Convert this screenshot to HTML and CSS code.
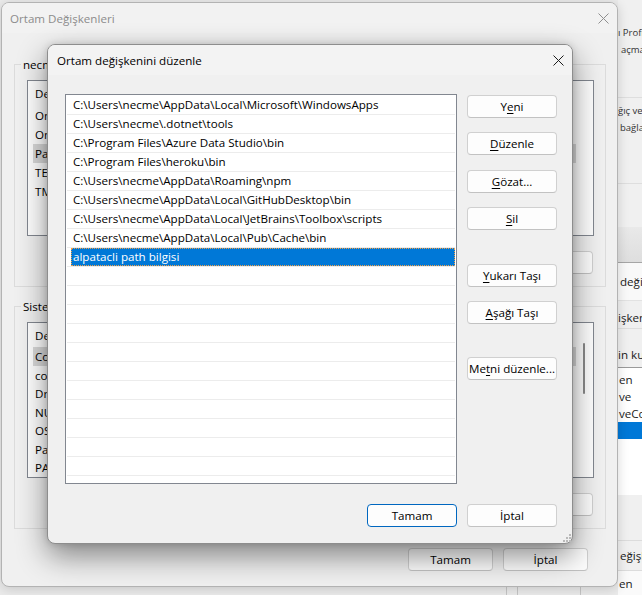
FILE: index.html
```html
<!DOCTYPE html>
<html lang="tr">
<head>
<meta charset="utf-8">
<title>Ortam değişkenini düzenle</title>
<link rel="stylesheet" href="styles.css">
</head>
<body>
<div class="desktop">

  <div class="backwin">
    <div class="back-left">
      <div class="back-bottom">
        <span class="bs bs1"></span><span class="bs bs2"></span><span class="bs bs3"></span>
      </div>
    </div>
    <div class="back-right">
      <div class="br br-a">
        <div class="bt small">ı Profilleri</div>
        <div class="bt small in3">açma ve kapatma</div>
      </div>
      <div class="br br-b">
        <div class="bt small">ğıç ve Kurtarma</div>
        <div class="bt small in2">bağlantısı</div>
      </div>
      <div class="br br-c"></div>
      <div class="br br-band"></div>
      <div class="br br-d"><div class="bt in2">değişkenleri</div></div>
      <div class="br br-e"><div class="bt">işkenleri</div></div>
      <div class="br br-f"><div class="bt">in kullanıcı</div></div>
      <div class="br br-list">
        <div class="bl in1">en</div>
        <div class="bl in1">ve</div>
        <div class="bl in1">veConsumer</div>
        <div class="bl bl-sel"></div>
      </div>
      <div class="br br-h"></div>
      <div class="br br-i"><div class="bt in2">eğişkenleri</div></div>
      <div class="br br-j"><div class="bt in1">en</div></div>
    </div>
  </div>

  <div class="window outer">
    <div class="titlebar outer-title">
      <span>Ortam Değişkenleri</span>
      <svg class="xicon" width="11" height="11" viewBox="0 0 11 11"><path d="M0.5 0.5 L10.5 10.5 M10.5 0.5 L0.5 10.5" stroke="#8f8f8f" stroke-width="1" fill="none"/></svg>
    </div>
    <div class="outer-body">
      <fieldset class="group">
        <legend>necme için kullanıcı değişkenleri</legend>
        <div class="lv">
          <div class="lv-body">
            <div class="lv-head"><span>Değişken</span><span></span></div>
            <div class="lv-row"><span>OneDrive</span><span></span></div>
            <div class="lv-row"><span>OneDriveConsumer</span><span></span></div>
            <div class="lv-row sel"><span>Path</span><span></span></div>
            <div class="lv-row"><span>TEMP</span><span></span></div>
            <div class="lv-row"><span>TMP</span><span></span></div>
          </div>
        </div>
        <div class="obtn-row">
          <button class="btn obtn"></button>
          <button class="btn obtn"></button>
          <button class="btn obtn"></button>
        </div>
      </fieldset>

      <fieldset class="group group2">
        <legend>Sistem değişkenleri</legend>
        <div class="lv">
          <div class="lv-body">
            <div class="lv-head"><span>Değişken</span><span></span></div>
            <div class="lv-row sel"><span>ComSpec</span><span></span></div>
            <div class="lv-row"><span>configsetroot</span><span></span></div>
            <div class="lv-row"><span>DriverData</span><span></span></div>
            <div class="lv-row"><span>NUMBER_OF_PROCESSORS</span><span></span></div>
            <div class="lv-row"><span>OS</span><span></span></div>
            <div class="lv-row"><span>Path</span><span></span></div>
            <div class="lv-row"><span>PATHEXT</span><span></span></div>
          </div>
          <div class="lv-scroll"><div class="lv-thumb"></div></div>
        </div>
        <div class="obtn-row">
          <button class="btn obtn"></button>
          <button class="btn obtn"></button>
          <button class="btn obtn"></button>
        </div>
      </fieldset>

      <div class="outer-foot">
        <button class="btn fbtn">Tamam</button>
        <button class="btn fbtn">İptal</button>
      </div>
    </div>
  </div>

  <div class="window dialog">
    <div class="titlebar dlg-title">
      <span>Ortam değişkenini düzenle</span>
      <svg class="xicon" width="11" height="11" viewBox="0 0 11 11"><path d="M0.5 0.5 L10.5 10.5 M10.5 0.5 L0.5 10.5" stroke="#1b1b1b" stroke-width="1" fill="none"/></svg>
    </div>
    <div class="dlg-body">
      <div class="pathlist">
        <div class="prow"><span>C:\Users\necme\AppData\Local\Microsoft\WindowsApps</span></div>
        <div class="prow"><span>C:\Users\necme\.dotnet\tools</span></div>
        <div class="prow"><span>C:\Program Files\Azure Data Studio\bin</span></div>
        <div class="prow"><span>C:\Program Files\heroku\bin</span></div>
        <div class="prow"><span>C:\Users\necme\AppData\Roaming\npm</span></div>
        <div class="prow"><span>C:\Users\necme\AppData\Local\GitHubDesktop\bin</span></div>
        <div class="prow"><span>C:\Users\necme\AppData\Local\JetBrains\Toolbox\scripts</span></div>
        <div class="prow"><span>C:\Users\necme\AppData\Local\Pub\Cache\bin</span></div>
        <div class="prow sel"><span>alpatacli path bilgisi</span></div>
        <div class="prow"><span></span></div>
        <div class="prow"><span></span></div>
        <div class="prow"><span></span></div>
        <div class="prow"><span></span></div>
        <div class="prow"><span></span></div>
        <div class="prow"><span></span></div>
        <div class="prow"><span></span></div>
        <div class="prow"><span></span></div>
        <div class="prow"><span></span></div>
        <div class="prow"><span></span></div>
        <div class="prow"><span></span></div>
      </div>
      <div class="btncol">
        <button class="btn">Y<u>e</u>ni</button>
        <button class="btn"><u>D</u>üzenle</button>
        <button class="btn gap-s"><u>G</u>özat...</button>
        <button class="btn"><u>S</u>il</button>
        <button class="btn gap-l"><u>Y</u>ukarı Taşı</button>
        <button class="btn"><u>A</u>şağı Taşı</button>
        <button class="btn gap-l2">Me<u>t</u>ni düzenle...</button>
      </div>
    </div>
    <div class="dlg-foot">
      <button class="btn dbtn default">Tamam</button>
      <button class="btn dbtn">İptal</button>
    </div>
    <svg class="grip" width="8" height="8" viewBox="0 0 8 8">
      <rect x="6" y="0" width="2" height="2" fill="#b9b9b9"/>
      <rect x="3" y="3" width="2" height="2" fill="#b9b9b9"/>
      <rect x="6" y="3" width="2" height="2" fill="#b9b9b9"/>
      <rect x="0" y="6" width="2" height="2" fill="#b9b9b9"/>
      <rect x="3" y="6" width="2" height="2" fill="#b9b9b9"/>
      <rect x="6" y="6" width="2" height="2" fill="#b9b9b9"/>
    </svg>
  </div>

</div>
</body>
</html>
```

FILE: styles.css
```css
* { box-sizing: border-box; }
html, body { margin: 0; padding: 0; }
body {
  width: 642px;
  height: 595px;
  overflow: hidden;
  font-family: "Segoe UI", "Open Sans", "Noto Sans", sans-serif;
  font-size: 11.6px;
  color: #000;
  background: #ececec;
}
.desktop { position: relative; width: 642px; height: 595px; overflow: hidden; }

/* background window */
.backwin {
  position: absolute;
  left: 0; top: 0; width: 642px; height: 595px;
  display: grid;
  grid-template-columns: 618px 24px;
}
.back-left { display: flex; flex-direction: column; justify-content: flex-end; background: #ebebeb; }
.back-bottom { height: 9px; display: flex; }
.bs { display: block; height: 9px; border-right: 1px solid #c6c6c6; }
.bs1 { width: 507px; }
.bs2 { width: 11px; }
.bs3 { width: 63px; }
.back-right { display: flex; flex-direction: column; overflow: hidden; white-space: nowrap; color: #1a1a1a; }
.br { flex: none; background: #f0f0f0; }
.bt { line-height: 19px; }
.bt.small { font-size: 9.5px; line-height: 17px; color: #333; }
.in1 { padding-left: 1px; }
.in2 { padding-left: 2px; }
.in3 { padding-left: 3px; }
.br-a { height: 98px; padding-top: 24px; border-bottom: 1px solid #dedede; }
.br-b { height: 86px; padding-top: 4px; border-bottom: 1px solid #dedede; }
.br-c { height: 43px; }
.br-band { height: 36px; background: linear-gradient(#e9e9e9, #dedede); border-bottom: 1px solid #a6a6a6; }
.br-d { height: 38px; padding-top: 9px; background: #f9f9f9; border-bottom: 1px solid #e2e2e2; }
.br-e { height: 28px; padding-top: 7px; border-bottom: 1px solid #dedede; }
.br-f { height: 38px; padding-top: 16px; }
.br-list { height: 128px; background: #fff; border-top: 1px solid #9a9a9a; padding-top: 3px; }
.bl { height: 17px; line-height: 17px; }
.bl-sel { background: #0078d7; }
.br-h { height: 46px; border-bottom: 1px solid #dcdcdc; }
.br-i { height: 30px; padding-top: 5px; border-bottom: 1px solid #dcdcdc; }
.br-j { height: 25px; padding-top: 3px; background: #fafafa; }

/* windows */
.window {
  position: absolute;
  background: #f0f0f0;
  border-radius: 8px;
  display: flex;
  flex-direction: column;
}
.titlebar {
  height: 30px;
  flex: none;
  display: flex;
  align-items: center;
  justify-content: space-between;
  border-radius: 7px 7px 0 0;
}
.xicon { display: block; }

.outer {
  left: 1px; top: 2px;
  width: 617px; height: 585px;
  border: 1px solid #b3b3b3;
  box-shadow: 0 2px 12px rgba(0, 0, 0, 0.16);
}
.outer-title { padding: 0 8px 0 8px; color: #8c8c8c; background: #f2f2f2; }
.outer-body { display: flex; flex-direction: column; padding: 24px 11px 0 12px; }

.group {
  margin: 0;
  min-width: 0;
  border: 1px solid #dcdcdc;
  padding: 8px 11px 12px 6px;
}
.group legend { padding: 0 2px; line-height: 15px; font-size: 11.6px; }
.group2 { margin-top: 12px; }
.lv {
  margin-left: 6px;
  height: 156px;
  border: 1px solid #828790;
  background: #fff;
  display: flex;
  overflow: hidden;
}
.lv-body { flex: 1; display: flex; flex-direction: column; min-width: 0; }
.lv-head, .lv-row {
  display: grid;
  grid-template-columns: 166px 1fr;
  white-space: nowrap;
  overflow: hidden;
}
.lv-head { height: 25px; align-items: center; padding-left: 7px; }
.lv-row { width: 543px; height: 19px; line-height: 19px; margin-left: 5px; padding-left: 2px; }
.lv-row.sel { background: #d9d9d9; }
.lv-scroll { width: 17px; flex: none; padding: 20px 0 0 7px; }
.lv-thumb { width: 2px; height: 51px; background: #8a8a8a; border-radius: 1px; }
.obtn-row { display: flex; justify-content: flex-end; gap: 8px; margin-top: 15px; padding-right: 1px; }
.obtn { width: 76px; }
.outer-foot { display: flex; justify-content: flex-end; gap: 10px; margin-top: 19px; padding-right: 18px; }
.fbtn { width: 85px; background: #f6f6f6; }

.btn {
  display: block;
  height: 23px;
  margin: 0;
  padding: 0;
  border: 1px solid #d0d0d0;
  border-bottom-color: #c2c2c2;
  border-radius: 4px;
  background: #fdfdfd;
  font: inherit;
  font-size: 11.6px;
  line-height: 21px;
  color: #000;
  text-align: center;
  white-space: nowrap;
}
.btn u { text-underline-offset: 2px; }

/* dialog */
.dialog {
  left: 47px; top: 44px;
  width: 526px; height: 500px;
  border: 1px solid #8d8d8d;
  box-shadow: 0 12px 30px rgba(0, 0, 0, 0.45), 0 0 7px rgba(0, 0, 0, 0.14);
  z-index: 2;
}
.dlg-title { padding: 0 8px 0 9px; background: #f3f3f3; color: #000; }
.dlg-body {
  display: grid;
  grid-template-columns: 392px 90px;
  column-gap: 10px;
  padding: 19px 15px 0 17px;
}
.pathlist {
  height: 390px;
  border: 1px solid #828790;
  background: #fff;
  padding: 1px 1px 0 1px;
  overflow: hidden;
}
.prow {
  height: 19px;
  border-bottom: 1px solid #ececec;
  padding-left: 4px;
  display: flex;
}
.prow span { flex: 1; padding-left: 2px; line-height: 18px; white-space: nowrap; overflow: hidden; }
.prow.sel span {
  background: #0078d7;
  color: #fff;
  outline: 1px dotted #f0a048;
  outline-offset: -1px;
}
.btncol { display: flex; flex-direction: column; gap: 14px; padding-top: 1px; }
.gap-s { margin-top: 1px; }
.gap-l { margin-top: 20px; }
.gap-l2 { margin-top: 19px; }
.dlg-foot { display: flex; justify-content: flex-end; gap: 10px; padding: 20px 15px 0 0; }
.dbtn { width: 90px; }
.btn.default { border-color: #0067c0; }
.grip { position: absolute; right: 1px; bottom: 1px; }
```
